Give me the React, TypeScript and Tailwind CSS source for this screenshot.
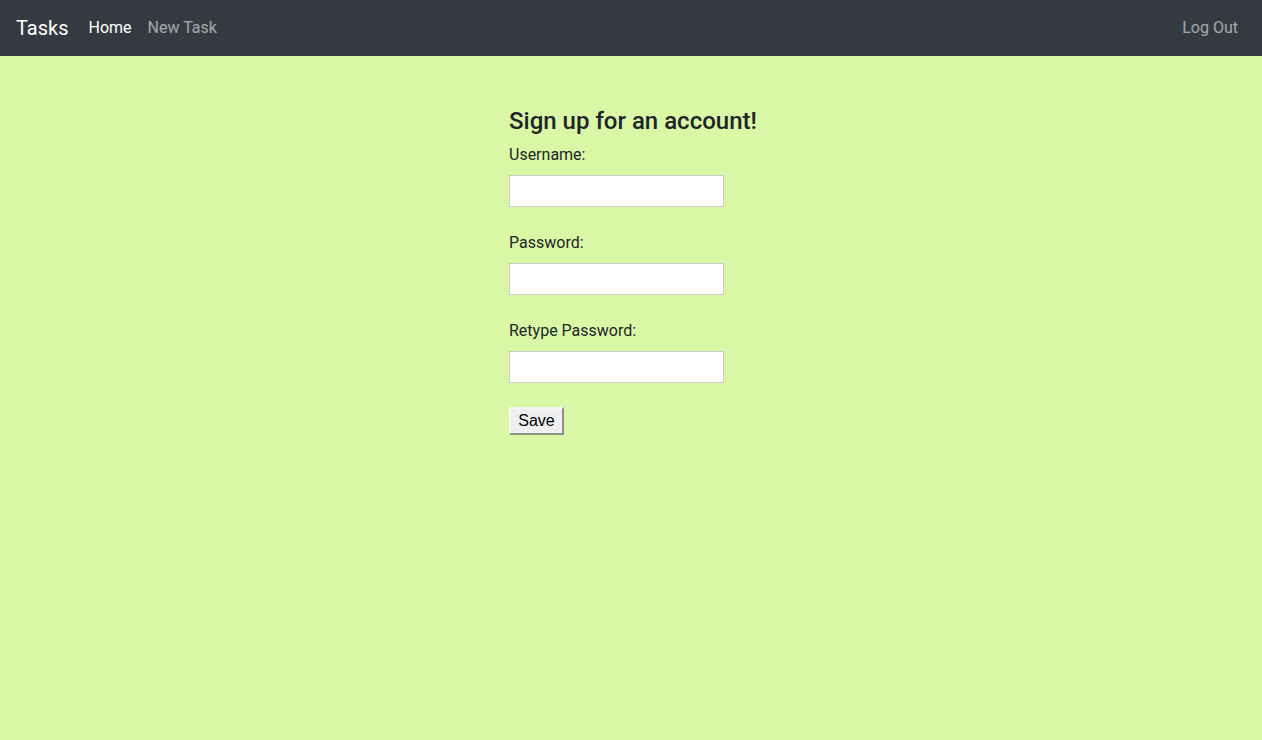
import { useState } from 'react'

const font = { fontFamily: 'Roboto, "Noto Sans", "Liberation Sans", sans-serif' }

function NavBar() {
  return (
    <nav className="flex h-14 items-center bg-[#343a40] px-4">
      <a href="#" className="mr-3 text-xl text-white">Tasks</a>
      <div className="flex flex-1 items-center">
        <a href="#" className="px-2 text-base text-white">Home</a>
        <a href="#" className="px-2 text-base text-white/55">New Task</a>
      </div>
      <a href="#" className="px-2 text-base text-white/55">Log Out</a>
    </nav>
  )
}

export default function App() {
  const [username, setUsername] = useState('')
  const [password, setPassword] = useState('')
  const [retype, setRetype] = useState('')

  return (
    <div className="min-h-[740px] bg-[#daf7a6] text-[#212529]" style={font}>
      <NavBar />
      <div className="flex justify-center pt-[51px]">
        <form onSubmit={(e) => e.preventDefault()} className="flex w-[244px] flex-col">
          <h4 className="mb-[7px] text-2xl leading-[1.2] font-medium whitespace-nowrap">Sign up for an account!</h4>
          <label className="mb-2 block text-base leading-6">Username:</label>
          <input
            value={username}
            onChange={(e) => setUsername(e.target.value)}
            className="mb-6 h-8 w-[215px] border border-[#cccccc] bg-white px-1 outline-none"
          />
          <label className="mb-2 block text-base leading-6">Password:</label>
          <input
            type="password"
            value={password}
            onChange={(e) => setPassword(e.target.value)}
            className="mb-6 h-8 w-[215px] border border-[#cccccc] bg-white px-1 outline-none"
          />
          <label className="mb-2 block text-base leading-6">Retype Password:</label>
          <input
            type="password"
            value={retype}
            onChange={(e) => setRetype(e.target.value)}
            className="mb-6 h-8 w-[215px] border border-[#cccccc] bg-white px-1 outline-none"
          />
          <div>
            <button
              type="submit"
              className="h-7 w-[55px] border-2 border-t-[#f5f5f5] border-l-[#f5f5f5] border-r-[#8f8f8f] border-b-[#8f8f8f] bg-[#efefef] text-base text-black"
              style={{ fontFamily: '"Liberation Sans", Arial, sans-serif' }}
            >
              Save
            </button>
          </div>
        </form>
      </div>
    </div>
  )
}
